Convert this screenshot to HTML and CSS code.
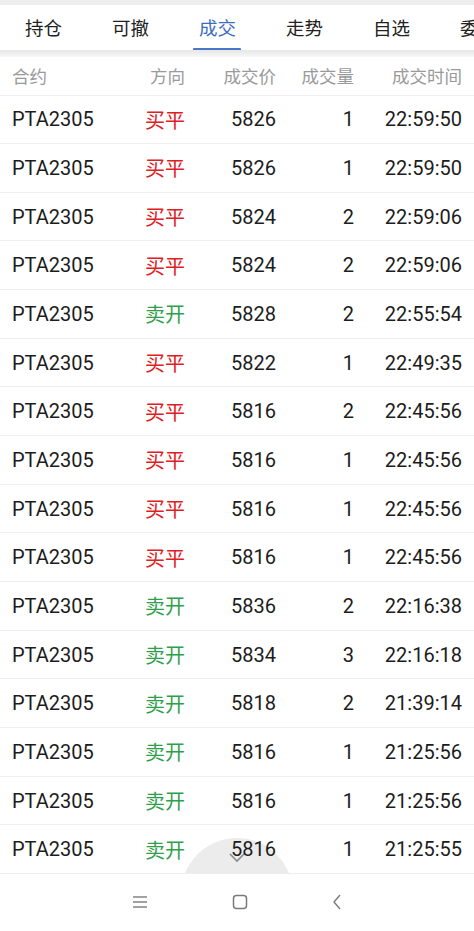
FILE: index.html
```html
<!DOCTYPE html>
<html lang="zh">
<head>
    <meta charset="UTF-8">
    <meta name="viewport" content="width=device-width, initial-scale=1.0">
    <title>成交</title>
    <link rel="stylesheet" href="styles.css">
</head>
<body>

<div class="top-strip"></div>

<div class="tabs">
    <div class="tab">持仓</div>
    <div class="tab">可撤</div>
    <div class="tab active">成交</div>
    <div class="tab">走势</div>
    <div class="tab">自选</div>
    <div class="tab">委托</div>
</div>
<div class="tab-shadow"></div>

<div class="table-head">
    <div class="c1">合约</div>
    <div class="c2">方向</div>
    <div class="c3">成交价</div>
    <div class="c4">成交量</div>
    <div class="c5">成交时间</div>
</div>

<div class="list">
    <div class="row"><div class="c1">PTA2305</div><div class="c2 buy">买平</div><div class="c3">5826</div><div class="c4">1</div><div class="c5">22:59:50</div></div>
    <div class="row"><div class="c1">PTA2305</div><div class="c2 buy">买平</div><div class="c3">5826</div><div class="c4">1</div><div class="c5">22:59:50</div></div>
    <div class="row"><div class="c1">PTA2305</div><div class="c2 buy">买平</div><div class="c3">5824</div><div class="c4">2</div><div class="c5">22:59:06</div></div>
    <div class="row"><div class="c1">PTA2305</div><div class="c2 buy">买平</div><div class="c3">5824</div><div class="c4">2</div><div class="c5">22:59:06</div></div>
    <div class="row"><div class="c1">PTA2305</div><div class="c2 sell">卖开</div><div class="c3">5828</div><div class="c4">2</div><div class="c5">22:55:54</div></div>
    <div class="row"><div class="c1">PTA2305</div><div class="c2 buy">买平</div><div class="c3">5822</div><div class="c4">1</div><div class="c5">22:49:35</div></div>
    <div class="row"><div class="c1">PTA2305</div><div class="c2 buy">买平</div><div class="c3">5816</div><div class="c4">2</div><div class="c5">22:45:56</div></div>
    <div class="row"><div class="c1">PTA2305</div><div class="c2 buy">买平</div><div class="c3">5816</div><div class="c4">1</div><div class="c5">22:45:56</div></div>
    <div class="row"><div class="c1">PTA2305</div><div class="c2 buy">买平</div><div class="c3">5816</div><div class="c4">1</div><div class="c5">22:45:56</div></div>
    <div class="row"><div class="c1">PTA2305</div><div class="c2 buy">买平</div><div class="c3">5816</div><div class="c4">1</div><div class="c5">22:45:56</div></div>
    <div class="row"><div class="c1">PTA2305</div><div class="c2 sell">卖开</div><div class="c3">5836</div><div class="c4">2</div><div class="c5">22:16:38</div></div>
    <div class="row"><div class="c1">PTA2305</div><div class="c2 sell">卖开</div><div class="c3">5834</div><div class="c4">3</div><div class="c5">22:16:18</div></div>
    <div class="row"><div class="c1">PTA2305</div><div class="c2 sell">卖开</div><div class="c3">5818</div><div class="c4">2</div><div class="c5">21:39:14</div></div>
    <div class="row"><div class="c1">PTA2305</div><div class="c2 sell">卖开</div><div class="c3">5816</div><div class="c4">1</div><div class="c5">21:25:56</div></div>
    <div class="row"><div class="c1">PTA2305</div><div class="c2 sell">卖开</div><div class="c3">5816</div><div class="c4">1</div><div class="c5">21:25:56</div></div>
    <div class="row"><div class="c1">PTA2305</div><div class="c2 sell">卖开</div><div class="c3">5816</div><div class="c4">1</div><div class="c5">21:25:55</div></div>

    <!-- pull-up button, half hidden under the nav bar -->
    <div class="more-btn">
        <svg width="18" height="12" viewBox="0 0 18 12">
            <polyline points="2,2 9,9 16,2" fill="none" stroke="#8a8a8a" stroke-width="1.6"/>
        </svg>
    </div>
</div>

<div class="navbar">
    <svg width="16" height="14" viewBox="0 0 16 14">
        <line x1="1" y1="2" x2="15" y2="2" stroke="#7a7a7a" stroke-width="1.4"/>
        <line x1="1" y1="7" x2="15" y2="7" stroke="#7a7a7a" stroke-width="1.4"/>
        <line x1="1" y1="12" x2="15" y2="12" stroke="#7a7a7a" stroke-width="1.4"/>
    </svg>
    <svg width="16" height="16" viewBox="0 0 16 16">
        <rect x="1.5" y="1.5" width="13" height="13" rx="3" fill="none" stroke="#7a7a7a" stroke-width="1.5"/>
    </svg>
    <svg width="10" height="16" viewBox="0 0 10 16">
        <polyline points="8,1 2,8 8,15" fill="none" stroke="#7a7a7a" stroke-width="1.4"/>
    </svg>
</div>

</body>
</html>
```

FILE: styles.css
```css
body {
    margin: 0;
    padding: 0;
    width: 474px;
    height: 931px;
    overflow: hidden;
    background-color: #ffffff;
    font-family: 'Roboto', 'Noto Sans CJK SC', sans-serif;
    color: #1a1a1a;
}

.top-strip {
    height: 5px;
    background-color: #eeeeee;
}

.tabs {
    display: flex;
    height: 45px;
    overflow: hidden;
    white-space: nowrap;
    background-color: #ffffff;
}

.tab {
    flex: 0 0 87px;
    position: relative;
    text-align: center;
    font-size: 18.5px;
    line-height: 49px;
    color: #222222;
}

.tab.active {
    color: #3d6bbf;
}

.tab.active::after {
    content: "";
    position: absolute;
    left: 19px;
    right: 20px;
    bottom: -1px;
    height: 3px;
    border-radius: 1px;
    background-color: #4a78c9;
}

.tab-shadow {
    height: 7px;
    background: linear-gradient(#e6e6e6, #f7f7f7);
}

.table-head, .row {
    display: grid;
    grid-template-columns: 90px 83px 91px 78px 108px;
    padding: 0 12px;
    align-items: center;
    border-bottom: 1px solid #eeeeee;
    box-sizing: border-box;
    white-space: nowrap;
}

.table-head {
    height: 38.5px;
    font-size: 17.5px;
    color: #9a9a9a;
}

.row {
    position: relative;
    z-index: 1;
    height: 48.67px;
    font-size: 20px;
    color: #1c1c1c;
}

.c2, .c3, .c4, .c5 {
    text-align: right;
}

.buy {
    color: #e0201e;
}

.sell {
    color: #2f9f4b;
}

.list {
    position: relative;
    overflow: hidden;
}

.more-btn {
    position: absolute;
    z-index: 0;
    left: 181px;
    bottom: -76px;
    width: 112px;
    height: 112px;
    border-radius: 50%;
    background-color: #ececec;
    display: flex;
    justify-content: center;
    padding-top: 14px;
    box-sizing: border-box;
}

.more-btn svg {
    position: relative;
    z-index: 2;
}

.navbar {
    height: 56px;
    display: flex;
    justify-content: center;
    align-items: center;
    gap: 84px;
    background-color: #ffffff;
}
```
